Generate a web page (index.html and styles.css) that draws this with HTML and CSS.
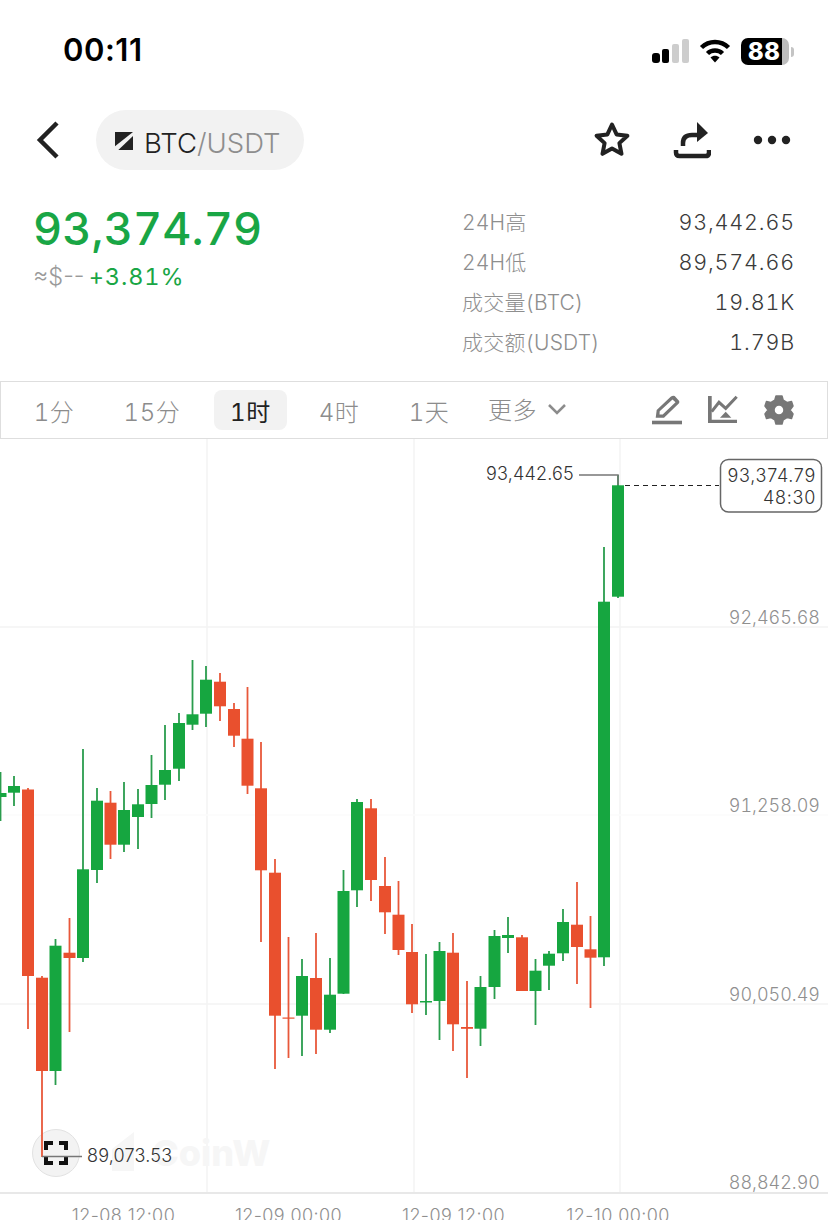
FILE: index.html
```html
<!DOCTYPE html>
<html lang="zh-CN">
<head>
<meta charset="utf-8">
<title>BTC/USDT</title>
<link rel="stylesheet" href="styles.css">
</head>
<body>
<div class="phone">
  <div class="status">
    <span class="time">00:11</span>
    <div class="status-icons">
      <svg class="signal" width="37" height="24" viewBox="0 0 37 24"><rect class="on" x="0" y="14" width="8" height="10" rx="3"/><rect class="on" x="10" y="10" width="7" height="14" rx="2"/><rect class="off" x="20" y="5" width="7" height="19" rx="2"/><rect class="off" x="30" y="0" width="7" height="24" rx="2"/></svg>
      <svg class="wifi" width="32" height="25" viewBox="0 0 32 25"><path class="arc" d="M2.5 9.5C10 2 22 2 29.500 9.500"/><path class="arc" d="M8.500 15.500C12.500 11.500 19.500 11.500 23.500 15.500"/><path class="wifi-dot" d="M11.500 19.500C14 17 18 17 20.500 19.500L16 24.500Z"/></svg>
      <div class="battery"><div class="battery-body"><span class="battery-num">88</span></div><div class="battery-tip"></div></div>
    </div>
  </div>

  <header class="nav">
    <svg class="back" width="24" height="38" viewBox="0 0 24 38"><path d="M21 2L4 19L21 36"/></svg>
    <div class="pair">
      <svg class="pair-logo" width="18" height="18" viewBox="0 0 18 18"><path d="M0 0H18L0 14.300Z"/><path d="M18 4V18H3.300Z"/></svg>
      <span class="pair-name">BTC<span class="pair-quote">/USDT</span></span>
    </div>
    <div class="nav-actions">
      <svg class="nav-icon" width="38" height="38" viewBox="0 0 38 38"><path class="star" d="M19 3.500L23.600 13.400L34.400 14.700L26.400 22.100L28.500 32.800L19 27.500L9.500 32.800L11.600 22.100L3.600 14.700L14.400 13.400Z"/></svg>
      <svg class="nav-icon" width="38" height="38" viewBox="0 0 38 38"><path class="share-tray" d="M3 29V31.500Q3 35 6.500 35H32.500Q36 35 36 31.500V29"/><path class="share-curve" d="M10 25V22Q10 14 19 14H25"/><path class="share-head" d="M24 1L35 12L24 21Z"/></svg>
      <svg class="nav-icon" width="38" height="38" viewBox="0 0 38 38"><circle class="dot" cx="5" cy="19" r="4.200"/><circle class="dot" cx="19" cy="19" r="4.200"/><circle class="dot" cx="33" cy="19" r="4.200"/></svg>
    </div>
  </header>

  <section class="summary">
    <div class="quote">
      <div class="price">93,374.79</div>
      <div class="sub"><span class="approx">≈$--</span> <span class="change">+3.81%</span></div>
    </div>
    <dl class="stats">
      <div class="stat"><dt>24H高</dt><dd>93,442.65</dd></div>
      <div class="stat"><dt>24H低</dt><dd>89,574.66</dd></div>
      <div class="stat"><dt>成交量(BTC)</dt><dd>19.81K</dd></div>
      <div class="stat"><dt>成交额(USDT)</dt><dd>1.79B</dd></div>
    </dl>
  </section>

  <nav class="tabs">
    <span class="tab t1">1分</span>
    <span class="tab t2">15分</span>
    <span class="tab t3 active">1时</span>
    <span class="tab t4">4时</span>
    <span class="tab t5">1天</span>
    <span class="tab t6">更多<svg class="more-chev" width="20" height="12" viewBox="0 0 20 12"><path d="M2 2L10 10L18 2"/></svg></span>
    <div class="tools">
      <svg width="30" height="30" viewBox="0 0 30 30"><path class="tool-line" fill-rule="evenodd" d="M3.700 22.700L4.700 15L18.700 1.700Q20.700 0.300 22.700 1L27 5.700Q27.800 7 27 8.300L12 22.700Z M7.700 16.300L7.500 19.500H10.700L23.500 7.200L20.500 4.500Z"/><rect class="tool-line" x="0" y="25.700" width="30" height="3.600"/></svg>
      <svg width="30" height="30" viewBox="0 0 30 30"><path class="tool-line" d="M0 1H3.700V24.700H29V28H0Z"/><path class="tool-stroke" d="M3.700 16.700L11 7.300L17.700 13.300L28.700 1.700"/><path class="tool-line" d="M12 22.700L17.700 16.700L23.300 22.700Z"/></svg>
      <svg width="30" height="32" viewBox="0 0 30 32"><path class="tool-gear" fill-rule="evenodd" d="M12 2H18L19.200 6.200L23.300 8.600L27.500 7.500L29 12L26 16L29 20L27.500 24.500L23.300 23.400L19.200 25.800L18 30H12L10.800 25.800L6.700 23.400L2.500 24.500L1 20L4 16L1 12L2.500 7.500L6.700 8.600L10.800 6.200Z M15 11A5 5 0 1 0 15 21A5 5 0 1 0 15 11Z"/></svg>
    </div>
  </nav>

  <svg class="chart" width="828" height="781" viewBox="0 439 828 781">
    <g class="grid">
      <path d="M207 439V1193M414 439V1193M620 439V1193M0 627H828M0 1004H828"/>
      <path class="grid-faint" d="M0 815H828"/>
    </g>
    <path class="axis" d="M0 1193H828"/>
    <text class="watermark" x="152" y="1166">CoinW</text>
    <path class="watermark-logo" d="M112 1171V1149L134 1132V1171Z"/>
    <circle class="full-btn" cx="56" cy="1153" r="23.500"/>

    <g class="up"><path d="M0.500 772V821"/><rect x="-6" y="793" width="12.500" height="4"/></g>
    <g class="up"><path d="M14 776V806"/><rect x="8" y="786" width="12" height="6.700"/></g>
    <g class="dn"><path d="M28 788V1029"/><rect x="22" y="789.500" width="12" height="186.500"/></g>
    <g class="dn"><path d="M42 976V1157"/><rect x="36" y="977.700" width="12" height="93.300"/></g>
    <g class="up"><path d="M55.500 939V1085"/><rect x="49.500" y="945.700" width="12" height="125.300"/></g>
    <g class="dn"><path d="M69.500 918V1032"/><rect x="63.500" y="952.700" width="12" height="5.300"/></g>
    <g class="up"><path d="M83 749V962"/><rect x="77" y="869.300" width="12" height="88.700"/></g>
    <g class="up"><path d="M97 788V883"/><rect x="91" y="800.700" width="12" height="69.300"/></g>
    <g class="dn"><path d="M110.500 791V859"/><rect x="104.500" y="802.700" width="12" height="42"/></g>
    <g class="up"><path d="M124 782V852"/><rect x="118" y="810" width="12" height="34.700"/></g>
    <g class="up"><path d="M138 789V849"/><rect x="132" y="804.300" width="12" height="12.700"/></g>
    <g class="up"><path d="M151.500 755V818"/><rect x="145.500" y="785" width="12" height="19"/></g>
    <g class="up"><path d="M165 725V800"/><rect x="159" y="770" width="12" height="14.700"/></g>
    <g class="up"><path d="M179 713V781"/><rect x="173" y="723" width="12" height="45.700"/></g>
    <g class="up"><path d="M192.500 660V730"/><rect x="186.500" y="714.300" width="12" height="10.400"/></g>
    <g class="up"><path d="M206 666V727"/><rect x="200" y="679.700" width="12" height="34"/></g>
    <g class="dn"><path d="M220 673V721"/><rect x="214" y="681.700" width="12" height="24.600"/></g>
    <g class="dn"><path d="M234 703V747"/><rect x="228" y="709" width="12" height="26.700"/></g>
    <g class="dn"><path d="M247.500 687V794"/><rect x="241.500" y="738.700" width="12" height="47"/></g>
    <g class="dn"><path d="M261 742V942"/><rect x="255" y="788.300" width="12" height="82"/></g>
    <g class="dn"><path d="M275 859V1069"/><rect x="269" y="872.700" width="12" height="143"/></g>
    <g class="dn"><path d="M288.500 937V1058"/><rect x="282.500" y="1017.500" width="12" height="1.200"/></g>
    <g class="up"><path d="M302 959V1056"/><rect x="296" y="976" width="12" height="39.700"/></g>
    <g class="dn"><path d="M316 933V1054"/><rect x="310" y="978" width="12" height="51.700"/></g>
    <g class="up"><path d="M330 958V1033"/><rect x="324" y="994.700" width="12" height="35"/></g>
    <g class="up"><path d="M343.500 870V994"/><rect x="337.500" y="891" width="12" height="102.700"/></g>
    <g class="up"><path d="M357 799V907"/><rect x="351" y="802" width="12" height="88.300"/></g>
    <g class="dn"><path d="M371 799V901"/><rect x="365" y="808.300" width="12" height="71.700"/></g>
    <g class="dn"><path d="M385 857V934"/><rect x="379" y="886" width="12" height="26.300"/></g>
    <g class="dn"><path d="M398.500 881V955"/><rect x="392.500" y="914.700" width="12" height="35.300"/></g>
    <g class="dn"><path d="M412 924V1013"/><rect x="406" y="952" width="12" height="52.300"/></g>
    <g class="up"><path d="M426 954V1015"/><rect x="420" y="1001" width="12" height="1.500"/></g>
    <g class="up"><path d="M439.500 942V1040"/><rect x="433.500" y="951" width="12" height="50"/></g>
    <g class="dn"><path d="M453 933V1051"/><rect x="447" y="952.700" width="12" height="71.600"/></g>
    <g class="dn"><path d="M467 981V1078"/><rect x="461" y="1027" width="12" height="1.800"/></g>
    <g class="up"><path d="M480.500 976V1046"/><rect x="474.500" y="987" width="12" height="41.700"/></g>
    <g class="up"><path d="M494.500 930V999"/><rect x="488.500" y="936" width="12" height="51"/></g>
    <g class="up"><path d="M508 917V953"/><rect x="502" y="935" width="12" height="3"/></g>
    <g class="dn"><path d="M522 935V991"/><rect x="516" y="937.300" width="12" height="53.700"/></g>
    <g class="up"><path d="M535.500 959V1025"/><rect x="529.500" y="970.700" width="12" height="20.300"/></g>
    <g class="up"><path d="M549 951V990"/><rect x="543" y="953.700" width="12" height="12"/></g>
    <g class="up"><path d="M563 909V961"/><rect x="557" y="922" width="12" height="31.300"/></g>
    <g class="dn"><path d="M577 882V984"/><rect x="571" y="924.700" width="12" height="22.300"/></g>
    <g class="dn"><path d="M590.500 916V1008"/><rect x="584.500" y="949.300" width="12" height="8.400"/></g>
    <g class="up"><path d="M604 547V966"/><rect x="598" y="601.700" width="12" height="355.600"/></g>
    <g class="up"><path d="M618 475V598"/><rect x="612" y="485.300" width="12" height="111.400"/></g>

    <text class="axis-y" x="820" y="624">92,465.68</text>
    <text class="axis-y" x="820" y="812">91,258.09</text>
    <text class="axis-y" x="820" y="1001">90,050.49</text>
    <text class="axis-y" x="820" y="1189">88,842.90</text>

    <text class="axis-x" x="123.500" y="1222">12-08 12:00</text>
    <text class="axis-x" x="288.500" y="1222">12-09 00:00</text>
    <text class="axis-x" x="453.500" y="1222">12-09 12:00</text>
    <text class="axis-x" x="618" y="1222">12-10 00:00</text>

    <path class="leader" d="M579 475H618V485"/>
    <text class="extreme end" x="574" y="480">93,442.65</text>
    <path class="dash" d="M625 485.500H719"/>
    <rect class="price-box" x="720.500" y="459.500" width="101" height="52.500" rx="8"/>
    <text class="extreme box-text end" x="816" y="482">93,374.79</text>
    <text class="extreme box-text end" x="816" y="504">48:30</text>

    <path class="full-icon" d="M46 1150V1143H53M59 1143H66V1150M66 1157V1163H59M53 1163H46V1157"/>
    <path class="leader" d="M42 1156.500H82"/>
    <text class="extreme" x="87" y="1162">89,073.53</text>
  </svg>
</div>
</body>
</html>
```
FILE: styles.css
```css
* { box-sizing: border-box; }
html, body { margin: 0; padding: 0; background: #fff; }
.phone {
  width: 828px;
  height: 1220px;
  overflow: hidden;
  background: #fff;
  font-family: Inter, "Noto Sans CJK SC", sans-serif;
  font-variant-numeric: tabular-nums;
  color: #222;
}
.status {
  height: 100px;
  padding: 32px 34px 0 63px;
  display: flex;
  justify-content: space-between;
  align-items: flex-start;
}
.time { font-size: 31px; font-weight: 600; line-height: 36px; color: #000; font-variant-numeric: normal; letter-spacing: 0.5px; }
.status-icons { display: flex; align-items: flex-end; gap: 10px; height: 31px; }
.signal .on { fill: #000; }
.signal .off { fill: #cdcdcd; }
.arc { fill: none; stroke: #000; stroke-width: 4.500; }
.wifi-dot { fill: #000; }
.battery { display: flex; align-items: center; gap: 2px; height: 27px; margin-bottom: -2px; }
.battery-body {
  width: 48px;
  height: 27px;
  border-radius: 7px;
  background: linear-gradient(90deg, #000 0 86%, #bdbdbd 86% 100%);
  display: flex;
  align-items: center;
  padding-left: 7px;
}
.battery-num { font-size: 24px; font-weight: 800; color: #fff; line-height: 1; letter-spacing: 0.8px; }
.battery-tip { width: 3px; height: 10px; border-radius: 0 3px 3px 0; background: #c4c4c4; }

.nav {
  height: 60px;
  margin-top: 10px;
  padding: 0 37px 0 36px;
  display: flex;
  align-items: center;
}
.back { margin-right: 36px; }
.back path { fill: none; stroke: #222; stroke-width: 4.500; }
.pair {
  width: 208px;
  height: 60px;
  border-radius: 30px;
  background: #f2f2f2;
  display: flex;
  align-items: center;
  gap: 11px;
  padding-left: 19px;
}
.pair-logo { margin-top: 2px; }
.pair-logo path { fill: #222; }
.pair-name { font-size: 27.500px; line-height: 34px; color: #222; letter-spacing: 0; margin-top: 5px; font-weight: 300; }
.pair-quote { color: #8e8e8e; }
.nav-actions { margin-left: auto; display: flex; gap: 42px; margin-top: -1px; }
.star { fill: none; stroke: #222; stroke-width: 4; stroke-linejoin: round; }
.share-tray { fill: none; stroke: #222; stroke-width: 4.500; }
.share-curve { fill: none; stroke: #222; stroke-width: 4.500; }
.share-head { fill: #222; }
.dot { fill: #222; }

.summary {
  height: 211px;
  padding: 30px 33px 0 33px;
  display: flex;
  justify-content: space-between;
  align-items: flex-start;
}
.price { font-size: 45px; font-weight: 500; line-height: 56px; color: #19a645; letter-spacing: 0.1px; margin-top: 1px; }
.sub { font-size: 23.500px; line-height: 30px; margin-top: 5px; letter-spacing: 0.9px; font-weight: 300; }
.approx { color: #9a9a9a; font-variant-numeric: normal; letter-spacing: 0; }
.change { color: #19a645; font-weight: 400; margin-left: -3px; }
.stats { margin: 0; width: 333px; display: flex; flex-direction: column; margin-top: 2px; }
.stat { height: 40px; display: flex; justify-content: space-between; align-items: center; }
.stat dt { font-size: 21px; font-weight: 300; color: #8e8e8e; letter-spacing: 0.2px; margin-top: -2px; }
.stat dd { margin: 0; font-size: 21.500px; font-weight: 300; color: #3a3a3a; letter-spacing: 0.850px; }

.tabs {
  position: relative;
  height: 58px;
  border: 1.500px solid #dedede;
  display: flex;
  align-items: center;
  font-size: 24px;
  color: #8c8c8c;
  letter-spacing: 0.6px;
}
.tab { display: flex; align-items: center; justify-content: center; height: 40px; font-weight: 300; }
.t1 { width: 44px; margin-left: 31px; }
.t2 { width: 60px; margin-left: 46px; }
.t3 { width: 73px; margin-left: 32px; }
.t4 { width: 44px; margin-left: 30px; }
.t5 { width: 44px; margin-left: 46px; }
.t6 { margin-left: 37px; gap: 10px; margin-top: -3px; }
.active { background: #f2f2f2; border-radius: 8px; color: #222; font-weight: 400; }
.more-chev path { fill: none; stroke: #8c8c8c; stroke-width: 2.500; }
.tools { margin-left: auto; display: flex; gap: 26px; margin-right: 33px; align-items: center; }
.tool-line { fill: #777; }
.tool-gear { fill: #777; stroke: #777; stroke-width: 1.500; stroke-linejoin: round; }
.tool-stroke { fill: none; stroke: #777; stroke-width: 3; }

.chart { display: block; }
.grid path { fill: none; stroke: #f4f4f4; stroke-width: 1.500; }
.grid .grid-faint { stroke: #fbfbfb; }
.axis { fill: none; stroke: #e8e8e8; stroke-width: 2; }
.watermark { font-size: 36px; font-weight: 800; fill: #f6f6f6; font-family: Inter, sans-serif; }
.watermark-logo { fill: #f6f6f6; }
.up path { fill: none; stroke: #2a9c4d; stroke-width: 1.800; }
.up rect { fill: #16a640; }
.dn path { fill: none; stroke: #e8583a; stroke-width: 1.800; }
.dn rect { fill: #e9502e; }
.axis-y { font-size: 18px; font-weight: 300; fill: #8f8f8f; text-anchor: end; letter-spacing: 0; }
.axis-x { font-size: 18px; font-weight: 300; fill: #8f8f8f; text-anchor: middle; letter-spacing: 0.4px; font-variant-numeric: normal; }
.extreme { font-size: 18px; font-weight: 300; fill: #333; letter-spacing: 0.2px; font-variant-numeric: normal; }
.box-text { letter-spacing: 0.7px; }
.end { text-anchor: end; }
.leader { fill: none; stroke: #777; stroke-width: 1.500; }
.dash { fill: none; stroke: #222; stroke-width: 1; stroke-dasharray: 5 4; }
.price-box { fill: #fff; stroke: #666; stroke-width: 1.500; }
.full-btn { fill: #f3f3f3; stroke: #e2e2e2; stroke-width: 1; }
.full-icon { fill: none; stroke: #111; stroke-width: 4; }
```
